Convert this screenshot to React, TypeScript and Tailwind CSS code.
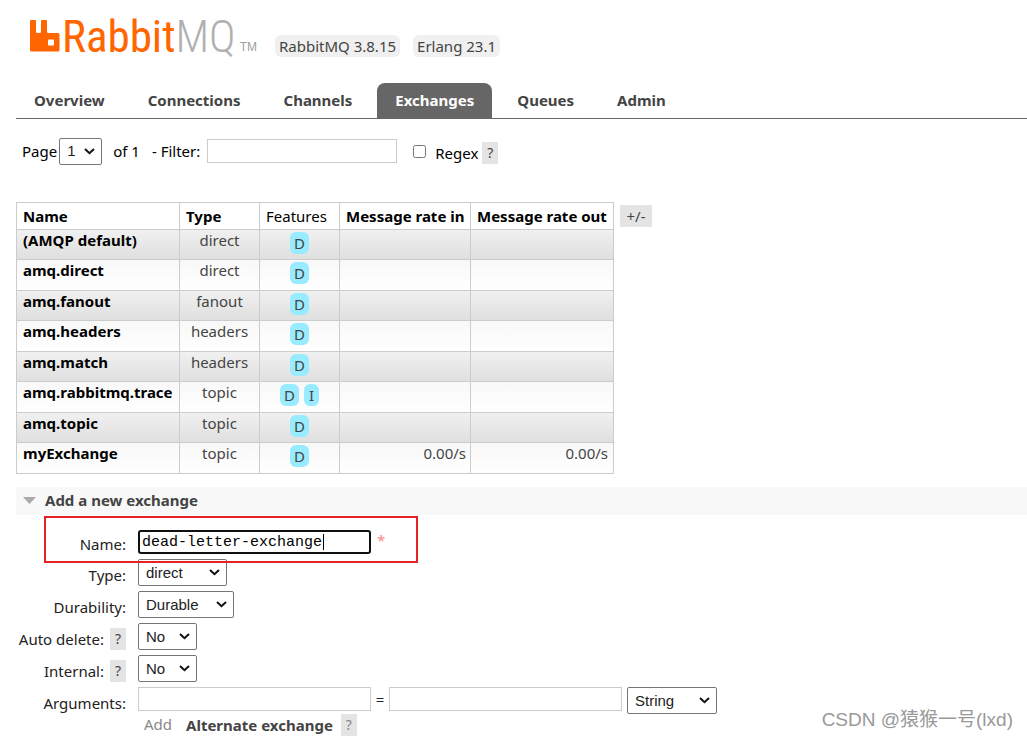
import { useState } from 'react';
import type { ReactNode } from 'react';

const tabs = ['Overview', 'Connections', 'Channels', 'Exchanges', 'Queues', 'Admin'];

const exchanges = [
  { name: '(AMQP default)', type: 'direct', features: ['D'], rateIn: '', rateOut: '' },
  { name: 'amq.direct', type: 'direct', features: ['D'], rateIn: '', rateOut: '' },
  { name: 'amq.fanout', type: 'fanout', features: ['D'], rateIn: '', rateOut: '' },
  { name: 'amq.headers', type: 'headers', features: ['D'], rateIn: '', rateOut: '' },
  { name: 'amq.match', type: 'headers', features: ['D'], rateIn: '', rateOut: '' },
  { name: 'amq.rabbitmq.trace', type: 'topic', features: ['D', 'I'], rateIn: '', rateOut: '' },
  { name: 'amq.topic', type: 'topic', features: ['D'], rateIn: '', rateOut: '' },
  { name: 'myExchange', type: 'topic', features: ['D'], rateIn: '0.00/s', rateOut: '0.00/s' },
];

const cell = 'border border-[#ccc]';
const inputClass = 'h-6 border border-[#ccc] bg-white px-1';

function Logo() {
  return (
    <div className="flex items-end">
      <svg className="mb-[5px] h-8 w-[30px]" viewBox="0 0 30 32" aria-hidden="true">
        <path
          fill="#f60"
          fillRule="evenodd"
          d="M1 0h4q1 0 1 1v10.500q0 1.500 1.500 1.500h2q1.500 0 1.500-1.500V1q0-1 1-1h4q1 0 1 1v10.500q0 1.500 1.500 1.500H28q1.500 0 1.500 1.500V30q0 1.500-1.500 1.500H1.500Q0 31.500 0 30V1q0-1 1-1zM19 19.500q-1 0-1 1v4q0 1 1 1h4q1 0 1-1v-4q0-1-1-1z"
        />
      </svg>
      <span className="ml-0.5 pb-px font-['Roboto_Condensed','Lato',sans-serif] text-[45px] leading-[38px] text-[#f60]">
        Rabbit<span className="font-light text-[#b0b0b0]">MQ</span>
      </span>
      <span className="mb-[5px] ml-1 font-['Liberation_Sans',sans-serif] text-xs leading-[10px] text-[#a0a0a0]">TM</span>
    </div>
  );
}

function Help({ muted }: { muted?: boolean }) {
  return (
    <button type="button" className={`h-[22px] w-4 bg-[#e4e4e4] text-center text-sm leading-[22px] ${muted ? 'text-[#888]' : 'text-[#444]'}`}>
      ?
    </button>
  );
}

function Select({ id, label, value, className }: { id: string; label?: string; value: string; className: string }) {
  return (
    <div className={`relative ${className}`}>
      <select
        id={id}
        aria-label={label}
        className="block h-[27px] w-full appearance-none rounded-[2px] border border-[#767676] bg-white pl-[7px] font-['Liberation_Sans',sans-serif] text-[15px] text-[#222]"
      >
        <option>{value}</option>
      </select>
      <svg className="pointer-events-none absolute top-2.5 right-[7px] h-[7px] w-[11px]" viewBox="0 0 11 7" fill="none" aria-hidden="true">
        <path d="M1 1l4.500 4.200L10 1" stroke="#111" strokeWidth="2" />
      </svg>
    </div>
  );
}

function Row({ id, label, help, children }: { id: string; label: string; help?: boolean; children: ReactNode }) {
  return (
    <>
      <div className="flex items-center justify-end gap-1.5 pt-1">
        <label htmlFor={id}>{label}</label>
        {help && <Help />}
      </div>
      <div className="flex items-start">{children}</div>
    </>
  );
}

export default function App() {
  const [active, setActive] = useState('Exchanges');
  const [name, setName] = useState('dead-letter-exchange');

  return (
    <div className="relative overflow-hidden bg-white pb-0.5 pl-4 font-['Noto_Sans',sans-serif] text-[15px] leading-5 text-black">
      <header className="flex items-end pt-[18px] pl-3.5">
        <Logo />
        <div className="ml-[18px] flex gap-[13px] text-[#444]">
          <span className="rounded-md bg-[#f0f0f0] px-1 leading-[22px]">RabbitMQ 3.8.15</span>
          <span className="rounded-md bg-[#f0f0f0] px-1 leading-[22px]">Erlang 23.1</span>
        </div>
      </header>

      <nav className="mt-[26px] flex gap-[7px] border-b border-[#666]">
        {tabs.map((tab) => (
          <button
            key={tab}
            type="button"
            onClick={() => setActive(tab)}
            className={`h-[35px] rounded-t-lg px-[18px] pb-0.5 font-bold ${active === tab ? 'bg-[#666] text-white' : 'text-[#444]'}`}
          >
            {tab}
          </button>
        ))}
      </nav>

      <div className="mt-[18px] flex h-7 items-center pl-1.5">
        <label htmlFor="page">Page</label>
        <Select id="page" value="1" className="ml-0.5 w-[43px]" />
        <span className="ml-[11px]">of 1</span>
        <label htmlFor="filter" className="ml-3">- Filter:</label>
        <input id="filter" type="text" className={`ml-[7px] w-[190px] ${inputClass}`} />
        <input id="regex" type="checkbox" className="ml-4 size-[13px]" />
        <label htmlFor="regex" className="ml-[9px] pt-1">Regex</label>
        <span className="ml-1 flex pt-1"><Help /></span>
      </div>

      <div className="mt-[37px] flex items-start gap-1.5">
        <table className="w-[598px] table-fixed border-collapse">
          <colgroup>
            <col className="w-[163px]" />
            <col className="w-20" />
            <col className="w-20" />
            <col className="w-[131px]" />
            <col className="w-[143px]" />
          </colgroup>
          <thead>
            <tr className="h-[27px] text-left whitespace-nowrap">
              <th className={`${cell} pl-1.5`}>Name</th>
              <th className={`${cell} pl-1.5`}>Type</th>
              <th className={`${cell} pl-1.5 font-normal`}>Features</th>
              <th className={`${cell} pl-1.5`}>Message rate in</th>
              <th className={`${cell} pl-1.5`}>Message rate out</th>
            </tr>
          </thead>
          <tbody>
            {exchanges.map((x) => (
              <tr
                key={x.name}
                className="h-[30px] bg-linear-to-b from-[#f0f0f0] to-[#dfdfdf] align-top text-[#444] even:h-[31px] even:from-[#f8f8f8] even:to-white"
              >
                <td className={`${cell} pl-1.5 font-bold whitespace-nowrap text-black`}><a href="#exchange">{x.name}</a></td>
                <td className={`${cell} text-center`}>{x.type}</td>
                <td className={`${cell} pt-0.5`}>
                  <div className="flex justify-center gap-[5px]">
                    {x.features.map((f) => (
                      <abbr key={f} className={`h-[22px] rounded-md bg-[#99ebff] text-center leading-[22px] ${f === 'I' ? 'w-[15px]' : 'w-[19px]'}`}>{f}</abbr>
                    ))}
                  </div>
                </td>
                <td className={`${cell} pr-1 text-right`}>{x.rateIn}</td>
                <td className={`${cell} pr-[5px] text-right`}>{x.rateOut}</td>
              </tr>
            ))}
          </tbody>
        </table>
        <button type="button" className="mt-[3px] h-[22px] w-8 bg-[#e4e4e4] leading-[22px] text-[#444]">+/-</button>
      </div>

      <h2 className="mt-[13px] flex h-7 items-center bg-[#f8f8f8] pb-0.5 pl-[7px] font-bold text-[#444]">
        <svg className="mr-[9px] h-[7px] w-[13px]" viewBox="0 0 13 7" aria-hidden="true">
          <path d="M0 0h13L6.500 7z" fill="#aaa" />
        </svg>
        Add a new exchange
      </h2>

      <form className="relative mt-[15px] grid grid-cols-[110px_1fr] gap-x-3 gap-y-[5px] text-[#222]">
        <Row id="name" label="Name:">
          <div className="relative">
            <input
              id="name"
              type="text"
              value={name}
              onChange={(e) => setName(e.target.value)}
              className="block h-6 w-[233px] rounded-[3px] border-2 border-[#101010] bg-white px-0.5 font-['Liberation_Mono',monospace] text-[15px] text-black outline-none"
            />
            <span className="absolute top-1 left-[185px] h-4 w-px bg-black" />
          </div>
          <span className="ml-1.5 text-[#f88]">*</span>
        </Row>
        <Row id="type" label="Type:">
          <Select id="type" value="direct" className="w-[89px]" />
        </Row>
        <Row id="durability" label="Durability:">
          <Select id="durability" value="Durable" className="w-24" />
        </Row>
        <Row id="auto-delete" label="Auto delete:" help>
          <Select id="auto-delete" value="No" className="w-[59px]" />
        </Row>
        <Row id="internal" label="Internal:" help>
          <Select id="internal" value="No" className="w-[59px]" />
        </Row>
        <Row id="arg-key" label="Arguments:">
          <input id="arg-key" type="text" className={`w-[233px] ${inputClass}`} />
          <span className="w-[18px] text-center leading-6">=</span>
          <input aria-label="Argument value" type="text" className={`w-[233px] ${inputClass}`} />
          <Select id="arg-type" label="Argument type" value="String" className="ml-[5px] w-[90px]" />
        </Row>
        <div className="col-start-2 -mt-[5px] flex pl-1.5">
          <span className="text-[#888]">Add</span>
          <button type="button" className="mr-2 ml-3.5 font-bold text-[#444]">Alternate exchange</button>
          <Help muted />
        </div>
        <div className="pointer-events-none absolute -top-3.5 left-7 h-[47px] w-[374px] border-2 border-[#e82127]" />
      </form>

      <p className="absolute right-3.5 bottom-1.5 font-['Liberation_Sans','Noto_Sans_CJK_SC',sans-serif] text-[19px] leading-6 text-[#999]">
        CSDN @猿猴一号(lxd)
      </p>
    </div>
  );
}
